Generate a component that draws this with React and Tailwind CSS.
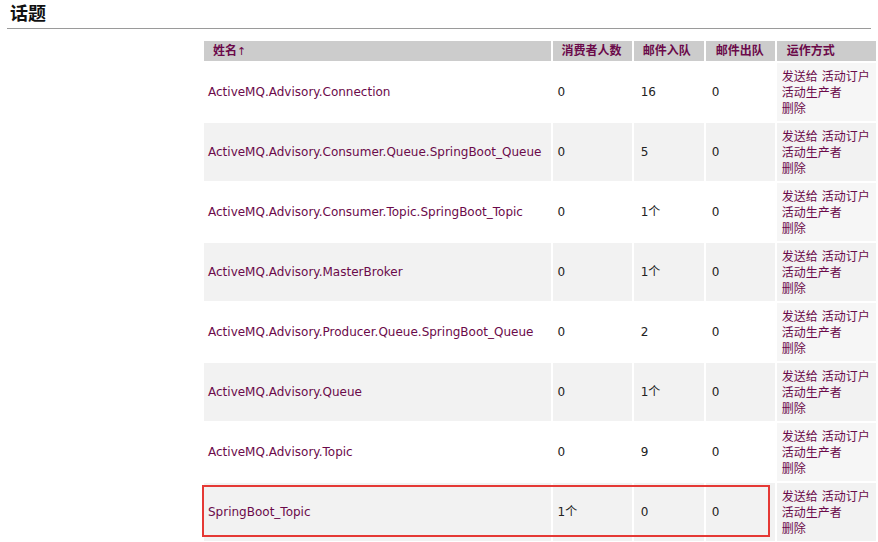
import React from "react";

const rows = [
  { name: "ActiveMQ.Advisory.Connection", consumers: "0", enq: "16", deq: "0" },
  { name: "ActiveMQ.Advisory.Consumer.Queue.SpringBoot_Queue", consumers: "0", enq: "5", deq: "0" },
  { name: "ActiveMQ.Advisory.Consumer.Topic.SpringBoot_Topic", consumers: "0", enq: "1个", deq: "0" },
  { name: "ActiveMQ.Advisory.MasterBroker", consumers: "0", enq: "1个", deq: "0" },
  { name: "ActiveMQ.Advisory.Producer.Queue.SpringBoot_Queue", consumers: "0", enq: "2", deq: "0" },
  { name: "ActiveMQ.Advisory.Queue", consumers: "0", enq: "1个", deq: "0" },
  { name: "ActiveMQ.Advisory.Topic", consumers: "0", enq: "9", deq: "0" },
  { name: "SpringBoot_Topic", consumers: "1个", enq: "0", deq: "0" },
];

const App = () => {
  return (
    <div className="w-[878px] h-[542px] overflow-hidden bg-white px-[7px] pt-[3px] text-[12px] text-[#222] font-['DejaVu_Sans','Noto_Sans_CJK_SC',sans-serif]">
      {/* Title */}
      <h2 className="pl-[3px] text-[18px] leading-[22px] font-bold text-[#111] font-['Liberation_Serif','Noto_Sans_CJK_SC',serif]">
        话题
      </h2>
      <div className="mt-[3px] h-px bg-[#9a9a9a]" />

      {/* Topics table */}
      <div className="relative ml-[195px] mt-[10px] w-[676px]">
        <table className="w-full border-separate border-spacing-[2px] text-[12px]">
          <thead>
            <tr className="h-[20px] bg-[#cccccc] text-left font-bold text-[#6b0a4a]">
              <th className="w-[346px] pl-[9px] font-bold">
                姓名<span className="font-normal text-[11px]">↑</span>
              </th>
              <th className="w-[79px] pl-[9px] font-bold">消费者人数</th>
              <th className="w-[70px] pl-[9px] font-bold">邮件入队</th>
              <th className="w-[69px] pl-[10px] font-bold">邮件出队</th>
              <th className="w-[99px] pl-[10px] font-bold">运作方式</th>
            </tr>
          </thead>
          <tbody>
            {rows.map((r, i) => (
              <tr key={r.name} className={i % 2 === 1 ? "h-[58px] bg-[#f2f2f2]" : "h-[58px] bg-white"}>
                <td className="pl-[4px] text-[#6b0a4a] whitespace-nowrap">{r.name}</td>
                <td className="pl-[5px]">{r.consumers}</td>
                <td className="pl-[7px]">{r.enq}</td>
                <td className="pl-[6px]">{r.deq}</td>
                <td className={i % 2 === 1 ? "pl-[5px] pt-[2px] leading-[16px] text-[#6b0a4a]" : "pl-[5px] pt-[2px] leading-[16px] text-[#6b0a4a] bg-[#f6f6f6]"}>
                  <div>发送给 活动订户</div>
                  <div>活动生产者</div>
                  <div>删除</div>
                </td>
              </tr>
            ))}
          </tbody>
        </table>

        {/* Highlight box around last row */}
        <div className="absolute left-0 top-[446px] w-[568px] h-[52px] border-2 border-[#e53935]" />
      </div>
    </div>
  );
};

export default App;
